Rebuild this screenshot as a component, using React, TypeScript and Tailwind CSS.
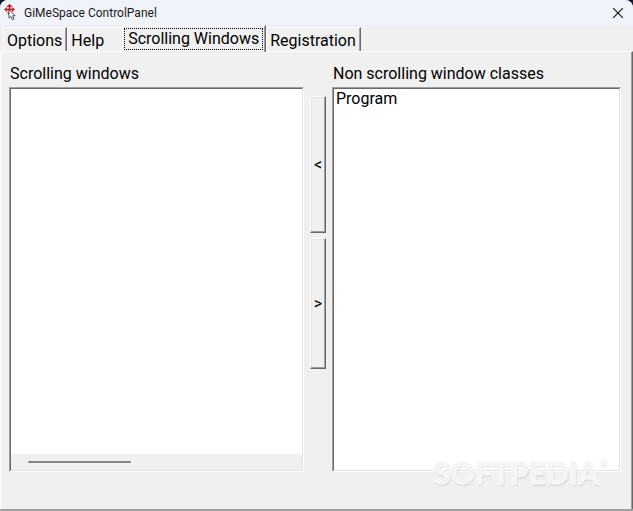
import { useState } from "react"
import clsx from "clsx"

const TABS = ["Options", "Help", "Scrolling Windows", "Registration"]

const NON_SCROLLING = ["Program"]

const AppIcon = () => (
  <svg width="14" height="17" viewBox="0 0 14 17" className="flex-none" aria-hidden="true">
    <path d="M5.5 0 8.5 3H6.3v8H4.7V3H2.5z" fill="#a0202c" />
    <path d="M2 4.8h7v1.5H2z" fill="#a0202c" />
    <path d="M5.5 0 8.3 3H2.7zM0 5.5 3 3v5zM11 5.5 8 3v5zM2.6 8.4h3v2.8z" fill="#e3182b" />
    <path d="M5 5.5v8.7l1.9-1.7 1.5 3.3 1.6-.8-1.5-3.2h2.6z" fill="#fff" stroke="#444" strokeWidth=".9" />
  </svg>
)

const TitleBar = () => (
  <header className="flex h-[25px] items-center bg-[#f0f3f9] pr-[9px] pl-1">
    <AppIcon />
    <h1 className="ml-1.5 flex-1 text-[12px] text-[#1a1a1a]">GiMeSpace ControlPanel</h1>
    <button aria-label="Close" className="flex size-3 items-center justify-center">
      <svg width="10" height="10" viewBox="0 0 10 10" stroke="#111" strokeWidth="1.1">
        <path d="M0 0 10 10M10 0 0 10" />
      </svg>
    </button>
  </header>
)

const MoveButton = ({ children, label, className }: { children: string; label: string; className: string }) => (
  <button
    aria-label={label}
    className={clsx(
      "w-full border border-t-white border-r-[#696969] border-b-[#696969] border-l-white text-center shadow-[inset_-1px_-1px_0_#a0a0a0,inset_1px_1px_0_#e3e3e3]",
      className
    )}
  >
    {children}
  </button>
)

const ListPane = ({
  id,
  label,
  items,
  scrollbar,
}: {
  id: string
  label: string
  items: string[]
  scrollbar?: boolean
}) => (
  <div className="flex min-w-0 flex-col">
    <label htmlFor={id} className="h-6 pl-px leading-[22px] whitespace-nowrap">
      {label}
    </label>
    <div className="flex flex-1 flex-col border border-t-[#a0a0a0] border-r-white border-b-white border-l-[#a0a0a0]">
      <div className="flex flex-1 flex-col border border-t-[#696969] border-r-[#e3e3e3] border-b-[#e3e3e3] border-l-[#696969] bg-white">
        <select id={id} size={2} className="w-full flex-1 appearance-none overflow-hidden bg-white outline-none">
          {items.map((item) => (
            <option key={item} className="min-h-0 px-0.5 py-0 leading-[22px]">
              {item}
            </option>
          ))}
        </select>
        {scrollbar && (
          <div className="flex h-4 items-center bg-[#f0f0f0] px-[17px]">
            <div className="h-0.5 w-2/5 rounded-full bg-[#858585]" />
          </div>
        )}
      </div>
    </div>
  </div>
)

const App = () => {
  const [active, setActive] = useState("Scrolling Windows")

  return (
    <div className="min-h-screen bg-[#101a30]">
      <div className="relative flex min-h-screen flex-col overflow-hidden rounded-t-lg border-b-2 border-[#a0a0a0] bg-[#f0f0f0] font-['Roboto',sans-serif] text-[16px] leading-[20px] text-black">
        <TitleBar />

        <div role="tablist" className="flex h-[26px] items-end pl-[3px]">
          {TABS.map((tab) => (
            <button
              key={tab}
              role="tab"
              aria-selected={tab === active}
              onClick={() => setActive(tab)}
              className={clsx(
                "border-t border-l border-t-white border-l-white whitespace-nowrap",
                tab === active
                  ? "z-10 -mb-px h-[27px] bg-[#f0f0f0] py-px pr-0.5 pl-px"
                  : "h-6 pt-0.5 pl-[3px]",
                tab === "Help"
                  ? "pr-[18px]"
                  : "border-r border-r-[#696969] shadow-[inset_-1px_0_0_#a0a0a0]",
                tab !== active && tab !== "Help" && "pr-1"
              )}
            >
              <span className={clsx(tab === active && "flex h-[22px] items-center border border-dotted border-black px-[3px]")}>
                {tab}
              </span>
            </button>
          ))}
        </div>

        <main className="grid flex-1 grid-cols-[295fr_16px_289fr] gap-x-1.5 border-t border-r border-l border-t-white border-r-[#696969] border-l-white pt-[11px] pr-[11px] pb-[37px] pl-2 shadow-[inset_-1px_0_0_#a0a0a0]">
          <ListPane id="scrolling" label="Scrolling windows" items={[]} scrollbar />
          <div className="flex flex-col gap-[5px] pt-[33px]">
            <MoveButton label="Move left" className="h-[137px]">
              {"<"}
            </MoveButton>
            <MoveButton label="Move right" className="h-[131px]">
              {">"}
            </MoveButton>
          </div>
          <ListPane id="non-scrolling" label="Non scrolling window classes" items={NON_SCROLLING} />
        </main>

        <div className="pointer-events-none absolute right-[26px] bottom-[17px] flex font-['Lato',sans-serif] text-[30px] leading-[40px] font-black text-[#f5f5f5] [-webkit-text-stroke:1px_#f5f5f5] [text-shadow:1px_2px_2px_rgba(0,0,0,0.09)]">
          SOFTPEDIA
          <span className="text-[10px] leading-[20px] [-webkit-text-stroke:0px]">®</span>
        </div>
      </div>
    </div>
  )
}

export default App
